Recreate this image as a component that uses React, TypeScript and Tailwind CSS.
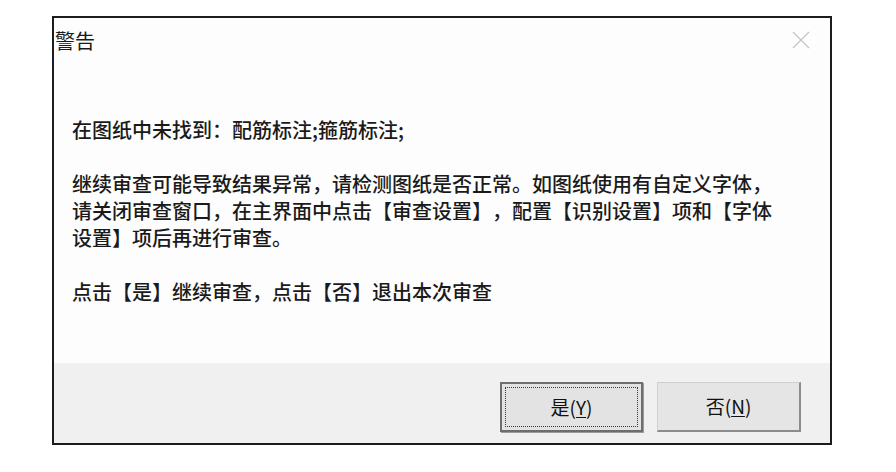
import type { ReactNode } from 'react';

const font = { fontFamily: '"Noto Sans CJK SC", "Noto Sans", sans-serif' };

const Hotkey = ({ label, keyChar }: { label: string; keyChar: string }) => (
    <span>
        {label}(<span className="underline underline-offset-2">{keyChar}</span>)
    </span>
);

const DialogButton = ({ children, isDefault }: { children: ReactNode; isDefault?: boolean }) =>
    isDefault ? (
        <button className="flex h-[50px] w-[143px] border-2 border-[#6e6e6e] bg-[#e3e3e3] p-[3px] shadow-[1px_1px_0_#9a9a9a]">
            <span className="flex h-full w-full items-center justify-center border border-dotted border-[#3a3a3a] text-[19px] text-[#111]">
                {children}
            </span>
        </button>
    ) : (
        <button className="flex h-[50px] w-[144px] items-center justify-center border-t border-l border-[#cfcfcf] border-r-2 border-b-2 border-r-[#8c8c8c] border-b-[#8c8c8c] bg-[#e5e5e5] text-[19px] text-[#111]">
            {children}
        </button>
    );

export default function App() {
    return (
        <div className="h-[472px] w-[896px] bg-white pl-[52px] pt-[16px]" style={font}>
            <div className="flex h-[429px] w-[780px] flex-col border-2 border-[#1c1c1c] bg-[#fdfdfd]">
                {/* Title bar */}
                <div className="flex h-[46px] items-center justify-between pl-[1px] pr-[20px]">
                    <span className="text-[20px] text-[#1a1a1a]">警告</span>
                    <svg width="18" height="18" viewBox="0 0 18 18" className="mt-[-2px]">
                        <path d="M1 1 L17 17 M17 1 L1 17" stroke="#c4c4c4" strokeWidth="1.2" fill="none" />
                    </svg>
                </div>

                {/* Message */}
                <div className="flex-1 pl-[18px] pt-[52px] text-[20px] font-medium leading-[27px] text-[#1a1a1a] [text-spacing-trim:space-all]">
                    <p>在图纸中未找到：配筋标注;箍筋标注;</p>
                    <p className="mt-[27px] max-w-[712px]">
                        继续审查可能导致结果异常，请检测图纸是否正常。如图纸使用有自定义字体，请关闭审查窗口，在主界面中点击【审查设置】，配置【识别设置】项和【字体设置】项后再进行审查。
                    </p>
                    <p className="mt-[27px]">点击【是】继续审查，点击【否】退出本次审查</p>
                </div>

                {/* Buttons */}
                <div className="flex h-[80px] justify-end gap-[14px] bg-[#f0f0f0] pr-[29px] pt-[19px]">
                    <DialogButton isDefault>
                        <Hotkey label="是" keyChar="Y" />
                    </DialogButton>
                    <DialogButton>
                        <Hotkey label="否" keyChar="N" />
                    </DialogButton>
                </div>
            </div>
        </div>
    );
}
